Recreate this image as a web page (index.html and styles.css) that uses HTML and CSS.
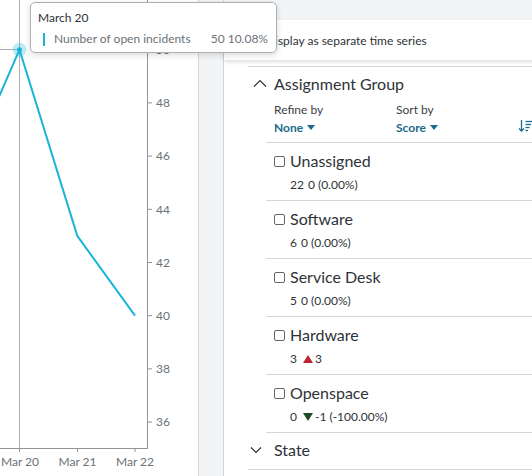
FILE: index.html
```html
<!DOCTYPE html>
<html lang="en">
<head>
    <meta charset="UTF-8">
    <meta name="viewport" content="width=device-width, initial-scale=1.0">
    <title>Open incidents</title>
    <link rel="stylesheet" href="styles.css">
</head>
<body>
    <div class="page">
        <div class="chart-pane">
            <svg class="chart" width="198" height="476" viewBox="0 0 198 476">
                <!-- hover crosshair -->
                <line class="crosshair" x1="19.5" y1="0" x2="19.5" y2="448"/>
                <line class="crosshair" x1="0" y1="49.5" x2="19.5" y2="49.5"/>

                <!-- axes -->
                <line class="axis" x1="147.5" y1="0" x2="147.5" y2="449"/>
                <line class="axis" x1="0" y1="448.5" x2="148" y2="448.5"/>

                <g class="y-ticks">
                    <line x1="148" y1="49.7" x2="152" y2="49.7"/><text x="156" y="54">50</text>
                    <line x1="148" y1="102.9" x2="152" y2="102.9"/><text x="156" y="107.2">48</text>
                    <line x1="148" y1="156.1" x2="152" y2="156.1"/><text x="156" y="160.4">46</text>
                    <line x1="148" y1="209.3" x2="152" y2="209.3"/><text x="156" y="213.6">44</text>
                    <line x1="148" y1="262.5" x2="152" y2="262.5"/><text x="156" y="266.8">42</text>
                    <line x1="148" y1="315.7" x2="152" y2="315.7"/><text x="156" y="320">40</text>
                    <line x1="148" y1="368.9" x2="152" y2="368.9"/><text x="156" y="373.2">38</text>
                    <line x1="148" y1="422.1" x2="152" y2="422.1"/><text x="156" y="426.4">36</text>
                </g>

                <g class="x-ticks">
                    <line x1="19.5" y1="449" x2="19.5" y2="452"/><text x="20" y="466">Mar 20</text>
                    <line x1="77.5" y1="449" x2="77.5" y2="452"/><text x="77.5" y="466">Mar 21</text>
                    <line x1="135" y1="449" x2="135" y2="452"/><text x="135" y="466">Mar 22</text>
                </g>

                <polyline class="series" points="-38.3,182.7 19.5,49.7 77.3,235.9 135,315.7"/>
                <circle class="halo" cx="19.5" cy="49.7" r="7"/>
                <circle class="dot" cx="19.5" cy="49.7" r="2.5"/>
            </svg>
        </div>

        <div class="gutter"></div>

        <div class="filters">
            <div class="filters-top"></div>
            <div class="series-option">
                <span class="checkbox"></span>
                <span>Display as separate time series</span>
            </div>

            <section class="facet">
                <div class="facet-head">
                    <svg class="chevron" width="18" height="12" viewBox="0 0 18 12">
                        <polyline points="4,8.5 10,2.5 16,8.5"/>
                    </svg>
                    <h2>Assignment Group</h2>
                </div>

                <div class="facet-controls">
                    <div class="control">
                        <div class="control-label">Refine by</div>
                        <div class="control-value">None <span class="caret"></span></div>
                    </div>
                    <div class="control">
                        <div class="control-label">Sort by</div>
                        <div class="control-value">Score <span class="caret"></span></div>
                    </div>
                    <svg class="sort-icon" width="16" height="14" viewBox="0 0 16 14">
                        <line x1="3.5" y1="1" x2="3.5" y2="12"/>
                        <polyline points="1,9.5 3.5,12 6,9.5"/>
                        <line x1="7.5" y1="2.5" x2="15" y2="2.5"/>
                        <line x1="7.5" y1="5.5" x2="13" y2="5.5"/>
                        <line x1="7.5" y1="8.5" x2="11.5" y2="8.5"/>
                        <line x1="7.5" y1="11.5" x2="10" y2="11.5"/>
                    </svg>
                </div>

                <ul class="facet-items">
                    <li class="facet-item">
                        <div class="item-name"><span class="checkbox"></span>Unassigned</div>
                        <div class="item-stats"><span class="count">22</span>0 (0.00%)</div>
                    </li>
                    <li class="facet-item">
                        <div class="item-name"><span class="checkbox"></span>Software</div>
                        <div class="item-stats"><span class="count">6</span>0 (0.00%)</div>
                    </li>
                    <li class="facet-item">
                        <div class="item-name"><span class="checkbox"></span>Service Desk</div>
                        <div class="item-stats"><span class="count">5</span>0 (0.00%)</div>
                    </li>
                    <li class="facet-item">
                        <div class="item-name"><span class="checkbox"></span>Hardware</div>
                        <div class="item-stats"><span class="count">3</span><span class="trend trend-up"></span>3</div>
                    </li>
                    <li class="facet-item">
                        <div class="item-name"><span class="checkbox"></span>Openspace</div>
                        <div class="item-stats"><span class="count">0</span><span class="trend trend-down"></span>-1 (-100.00%)</div>
                    </li>
                </ul>
            </section>

            <section class="facet facet-closed">
                <div class="facet-head">
                    <svg class="chevron" width="18" height="12" viewBox="0 0 18 12">
                        <polyline points="1,3.5 6,8.5 11,3.5"/>
                    </svg>
                    <h2>State</h2>
                </div>
            </section>
        </div>

        <div class="tooltip">
            <div class="tooltip-title">March 20</div>
            <div class="tooltip-row">
                <span class="swatch"></span>
                <span class="tooltip-label">Number of open incidents</span>
                <span class="tooltip-value">50 10.08%</span>
            </div>
        </div>
    </div>
</body>
</html>
```

FILE: styles.css
```css
body {
    margin: 0;
    font-family: Lato, "Open Sans", sans-serif;
    color: #2e3338;
    background-color: #fff;
}
.page {
    position: relative;
    display: flex;
    width: 532px;
    height: 476px;
    overflow: hidden;
}

/* chart */
.chart-pane {
    flex: none;
    width: 198px;
    background-color: #fff;
}
.chart {
    display: block;
}
.chart text {
    font-family: Lato, sans-serif;
    font-size: 12px;
    fill: #6b7278;
}
.crosshair {
    stroke: #a9afb4;
    stroke-width: 1;
}
.axis,
.y-ticks line,
.x-ticks line {
    stroke: #8d949a;
    stroke-width: 1;
}
.x-ticks text {
    text-anchor: middle;
}
.series {
    fill: none;
    stroke: #1ab4d8;
    stroke-width: 2;
    stroke-linejoin: round;
}
.halo {
    fill: rgba(26, 180, 216, 0.28);
}
.dot {
    fill: #1ab4d8;
}

.gutter {
    flex: none;
    width: 24px;
    background-color: #f3f4f5;
    border-left: 1px solid #d4d7da;
    border-right: 1px solid #d4d7da;
}

/* filters */
.filters {
    flex: 1;
    background-color: #fff;
}
.filters-top {
    height: 20px;
    background-color: #f3f4f5;
}
.series-option {
    display: flex;
    align-items: center;
    height: 40px;
    padding-left: 25px;
    font-size: 12px;
    color: #2e3338;
    background-color: #fff;
    box-shadow: 0 2px 4px rgba(0, 0, 0, 0.13);
    position: relative;
}
.checkbox {
    display: inline-block;
    flex: none;
    width: 9px;
    height: 9px;
    border: 1px solid #5f666c;
    border-radius: 2px;
    margin-right: 5px;
}
.series-option .checkbox {
    margin-right: 6px;
}

.facet {
    margin-left: 24px;
}
.facet:first-of-type {
    margin-top: 6px;
    border-top: 1px solid #d4d7da;
}
.facet-closed {
    border-bottom: 1px solid #d4d7da;
}
.facet-head {
    display: flex;
    align-items: center;
    padding: 5px 0 7px 2px;
}
.facet:first-of-type .facet-head {
    padding-bottom: 0;
}
.chevron {
    flex: none;
    margin-right: 6px;
}
.chevron polyline {
    fill: none;
    stroke: #2e3338;
    stroke-width: 1.2;
}
.facet-head h2 {
    margin: 0;
    font-size: 16px;
    font-weight: 400;
    line-height: 24px;
    color: #2e3338;
}

.facet-controls {
    display: flex;
    align-items: flex-end;
    margin-left: 18px;
    padding: 6px 2px 6px 8px;
    border-bottom: 1px solid #d4d7da;
}
.control {
    width: 122px;
}
.control-label {
    font-size: 12px;
    line-height: 16px;
    color: #3c4248;
}
.control-value {
    margin-top: 2px;
    font-size: 12px;
    line-height: 16px;
    font-weight: 700;
    color: #1b6a8a;
}
.caret {
    display: inline-block;
    width: 0;
    height: 0;
    margin-left: 1px;
    vertical-align: 2px;
    border-left: 4.5px solid transparent;
    border-right: 4.5px solid transparent;
    border-top: 5px solid #1b6a8a;
}
.sort-icon {
    margin-left: auto;
    margin-bottom: 3px;
}
.sort-icon line,
.sort-icon polyline {
    fill: none;
    stroke: #1b6a8a;
    stroke-width: 1.3;
}

.facet-items {
    list-style: none;
    margin: 0 0 0 18px;
    padding: 0;
}
.facet-item {
    padding: 8px 0 7px 8px;
    border-bottom: 1px solid #d4d7da;
}
.item-name {
    display: flex;
    align-items: center;
    font-size: 16px;
    line-height: 20px;
    color: #2e3338;
}
.item-stats {
    margin-top: 6px;
    padding-left: 16px;
    font-size: 12px;
    line-height: 16px;
    color: #2e3338;
}
.count {
    margin-right: 4px;
}
.trend {
    display: inline-block;
    width: 0;
    height: 0;
    margin: 0 2px 0 2px;
    border-left: 5px solid transparent;
    border-right: 5px solid transparent;
}
.trend-up {
    border-bottom: 8px solid #c0232f;
}
.trend-down {
    border-top: 8px solid #1d4a28;
}

/* tooltip */
.tooltip {
    position: absolute;
    left: 30px;
    top: 2px;
    width: 247px;
    height: 51px;
    box-sizing: border-box;
    padding: 7px 8px 0 7px;
    background-color: #fff;
    border: 1px solid #aab0b5;
    border-radius: 5px;
    box-shadow: 0 2px 6px rgba(0, 0, 0, 0.15);
    font-size: 12px;
    line-height: 16px;
}
.tooltip-title {
    color: #2e3338;
}
.tooltip-row {
    display: flex;
    align-items: center;
    margin-top: 5px;
    color: #6b7278;
}
.swatch {
    width: 2px;
    height: 13px;
    margin: 0 9px 0 5px;
    background-color: #1ab4d8;
}
.tooltip-value {
    margin-left: auto;
}
```
